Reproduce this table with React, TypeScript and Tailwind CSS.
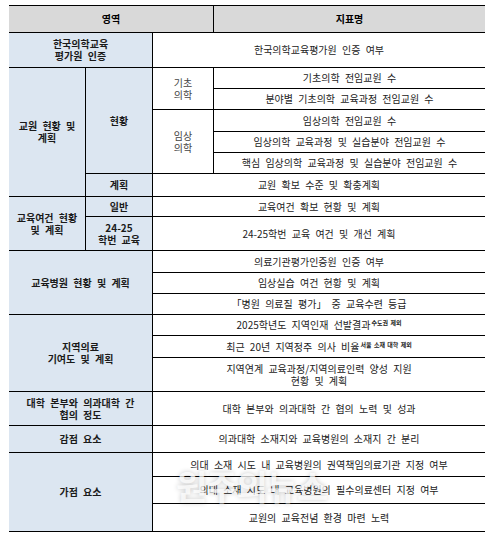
import React from 'react';

// 셀 공통 스타일
const base = 'flex items-center justify-center text-center border-b border-black';
const blue = `${base} bg-[#dce6f1] font-bold text-[#1a1a1a]`;
const white = `${base} bg-white text-[#222]`;

const Sup: React.FC<{ children: React.ReactNode }> = ({ children }) => (
  <span className="relative -top-[4px] ml-[1px] text-[6px] leading-[6px] font-bold [word-spacing:1px]">{children}</span>
);

const App: React.FC = () => {
  return (
    <div
      className="relative w-[503px] h-[542px] bg-white pt-[5px] pl-[9px] text-[10px] leading-[12px] [word-spacing:3px]"
      style={{ fontFamily: '"Noto Sans CJK KR", "Noto Sans", sans-serif' }}
    >
      <div className="grid w-[476px] border-t border-black grid-cols-[77px_67px_61px_271px] grid-rows-[27px_35px_21px_21px_22px_21px_21px_23px_20px_34px_22px_21px_21px_21px_22px_34px_34px_27px_24px_27px_28px]">
        {/* 헤더 */}
        <div className={`${base} col-start-1 col-span-3 row-start-1 bg-[#d9d9d9] font-bold border-r`}>영역</div>
        <div className={`${base} col-start-4 row-start-1 bg-[#d9d9d9] font-bold`}>지표명</div>

        {/* 한국의학교육평가원 */}
        <div className={`${blue} col-start-1 col-span-2 row-start-2 border-r`}>
          한국의학교육
          <br />
          평가원 인증
        </div>
        <div className={`${white} col-start-3 col-span-2 row-start-2`}>한국의학교육평가원 인증 여부</div>

        {/* 교원 현황 및 계획 */}
        <div className={`${blue} col-start-1 row-start-3 row-span-6 border-r`}>
          교원 현황 및
          <br />
          계획
        </div>
        <div className={`${blue} col-start-2 row-start-3 row-span-5 border-r`}>현황</div>
        <div className={`${white} col-start-3 row-start-3 row-span-2 border-r text-[#444]`}>
          기초
          <br />
          의학
        </div>
        <div className={`${white} col-start-4 row-start-3`}>기초의학 전임교원 수</div>
        <div className={`${white} col-start-4 row-start-4`}>분야별 기초의학 교육과정 전임교원 수</div>
        <div className={`${white} col-start-3 row-start-5 row-span-3 border-r text-[#444]`}>
          임상
          <br />
          의학
        </div>
        <div className={`${white} col-start-4 row-start-5`}>임상의학 전임교원 수</div>
        <div className={`${white} col-start-4 row-start-6`}>임상의학 교육과정 및 실습분야 전임교원 수</div>
        <div className={`${white} col-start-4 row-start-7`}>핵심 임상의학 교육과정 및 실습분야 전임교원 수</div>
        <div className={`${blue} col-start-2 row-start-8 border-r`}>계획</div>
        <div className={`${white} col-start-3 col-span-2 row-start-8`}>교원 확보 수준 및 확충계획</div>

        {/* 교육여건 */}
        <div className={`${blue} col-start-1 row-start-9 row-span-2 border-r`}>
          교육여건 현황
          <br />
          및 계획
        </div>
        <div className={`${blue} col-start-2 row-start-9 border-r`}>일반</div>
        <div className={`${white} col-start-3 col-span-2 row-start-9`}>교육여건 확보 현황 및 계획</div>
        <div className={`${blue} col-start-2 row-start-10 border-r`}>
          24-25
          <br />
          학번 교육
        </div>
        <div className={`${white} col-start-3 col-span-2 row-start-10`}>24-25학번 교육 여건 및 개선 계획</div>

        {/* 교육병원 */}
        <div className={`${blue} col-start-1 col-span-2 row-start-11 row-span-3 border-r`}>교육병원 현황 및 계획</div>
        <div className={`${white} col-start-3 col-span-2 row-start-11`}>의료기관평가인증원 인증 여부</div>
        <div className={`${white} col-start-3 col-span-2 row-start-12`}>임상실습 여건 현황 및 계획</div>
        <div className={`${white} col-start-3 col-span-2 row-start-13`}>「병원 의료질 평가」 중 교육수련 등급</div>

        {/* 지역의료 */}
        <div className={`${blue} col-start-1 col-span-2 row-start-14 row-span-3 border-r`}>
          지역의료
          <br />
          기여도 및 계획
        </div>
        <div className={`${white} col-start-3 col-span-2 row-start-14`}>
          <span>
            2025학년도 지역인재 선발결과<Sup>수도권 제외</Sup>
          </span>
        </div>
        <div className={`${white} col-start-3 col-span-2 row-start-15`}>
          <span>
            최근 20년 지역정주 의사 비율<Sup>서울 소재 대학 제외</Sup>
          </span>
        </div>
        <div className={`${white} col-start-3 col-span-2 row-start-16`}>
          지역연계 교육과정/지역의료인력 양성 지원
          <br />
          현황 및 계획
        </div>

        {/* 대학 본부 */}
        <div className={`${blue} col-start-1 col-span-2 row-start-17 border-r`}>
          대학 본부와 의과대학 간
          <br />
          협의 정도
        </div>
        <div className={`${white} col-start-3 col-span-2 row-start-17`}>대학 본부와 의과대학 간 협의 노력 및 성과</div>

        {/* 감점 */}
        <div className={`${blue} col-start-1 col-span-2 row-start-18 border-r`}>감점 요소</div>
        <div className={`${white} col-start-3 col-span-2 row-start-18`}>의과대학 소재지와 교육병원의 소재지 간 분리</div>

        {/* 가점 */}
        <div className={`${blue} col-start-1 col-span-2 row-start-19 row-span-3 border-r`}>가점 요소</div>
        <div className={`${white} col-start-3 col-span-2 row-start-19`}>의대 소재 시도 내 교육병원의 권역책임의료기관 지정 여부</div>
        <div className={`${white} col-start-3 col-span-2 row-start-20`}>의대 소재 시도 내 교육병원의 필수의료센터 지정 여부</div>
        <div className={`${white} col-start-3 col-span-2 row-start-21`}>교원의 교육전념 환경 마련 노력</div>
      </div>

      {/* 워터마크 */}
      <div className="absolute left-[176px] top-[466px] text-[34px] leading-[40px] font-bold text-white/75 tracking-[-1px] [word-spacing:0] [text-shadow:0_0_5px_rgba(0,0,0,0.22)] pointer-events-none">
        원주의뉴스
      </div>
    </div>
  );
};

export default App;
